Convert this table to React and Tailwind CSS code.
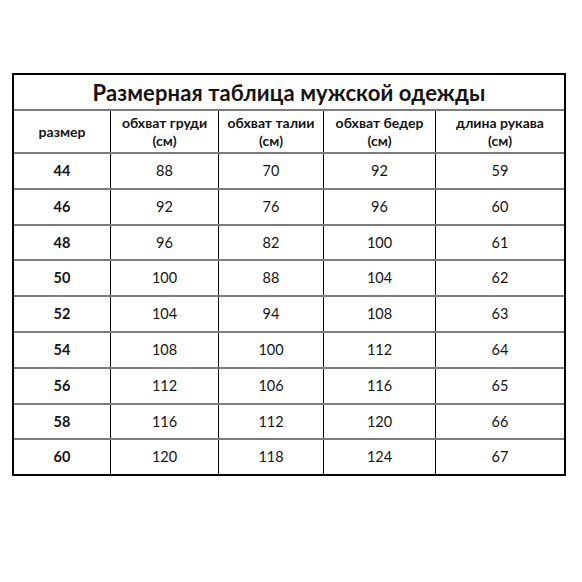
const cols = ["w-[96px]", "w-[108px]", "w-[105px]", "w-[112px]", "w-[129px]"];

const headers = [
  ["размер"],
  ["обхват груди", "(см)"],
  ["обхват талии", "(см)"],
  ["обхват бедер", "(см)"],
  ["длина рукава", "(см)"],
];

const rows = [
  ["44", "88", "70", "92", "59"],
  ["46", "92", "76", "96", "60"],
  ["48", "96", "82", "100", "61"],
  ["50", "100", "88", "104", "62"],
  ["52", "104", "94", "108", "63"],
  ["54", "108", "100", "112", "64"],
  ["56", "112", "106", "116", "65"],
  ["58", "116", "112", "120", "66"],
  ["60", "120", "118", "124", "67"],
];

function Cell({ i, children, className = "" }) {
  return (
    <div
      className={`${cols[i]} ${i > 0 ? "border-l border-black" : ""} flex flex-col items-center justify-center text-center ${className}`}
    >
      {children}
    </div>
  );
}

export default function App() {
  return (
    <div className="w-[582px] h-[582px] bg-white font-['Lato','Open_Sans',sans-serif] text-[#141414]">
      <div className="ml-[12px] pt-[73px]">
        <div className="w-[554px] border-2 border-black">
          <div className="h-[36px] flex items-center justify-center border-b-2 border-[#7d7d7d] text-[22px] font-bold tracking-[0.1px]">
            Размерная таблица мужской одежды
          </div>
          <div className="h-[43px] flex border-b-2 border-[#7d7d7d] text-[14px] font-bold leading-[18px]">
            {headers.map((h, i) => (
              <Cell key={i} i={i}>
                {h.map((t) => (
                  <span key={t}>{t}</span>
                ))}
              </Cell>
            ))}
          </div>
          {rows.map((r, ri) => (
            <div
              key={ri}
              className={`h-[33.8px] flex text-[14.5px] ${ri < rows.length - 1 ? "border-b-2 border-[#7d7d7d] box-content" : ""}`}
            >
              {r.map((v, i) => (
                <Cell key={i} i={i} className={i === 0 ? "font-bold" : ""}>
                  {v}
                </Cell>
              ))}
            </div>
          ))}
        </div>
      </div>
    </div>
  );
}
